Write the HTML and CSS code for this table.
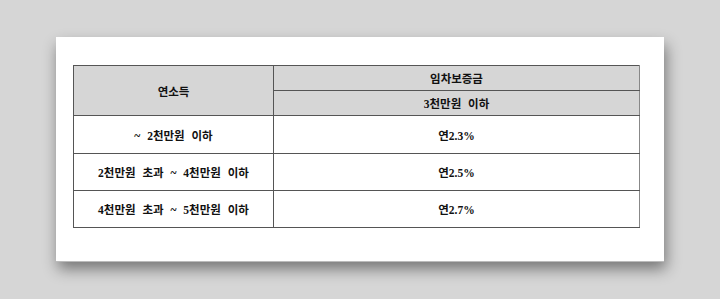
FILE: index.html
```html
<!DOCTYPE html>
<html lang="ko">
<head>
<meta charset="utf-8">
<link rel="stylesheet" href="styles.css">
</head>
<body>
<div class="paper">
  <table class="rate">
    <tr class="head">
      <th rowspan="2" class="c1">연소득</th>
      <th class="h1">임차보증금</th>
    </tr>
    <tr class="head">
      <th class="h2">3천만원 이하</th>
    </tr>
    <tr class="r1"><td>~ 2천만원 이하</td><td>연2.3%</td></tr>
    <tr class="r2"><td>2천만원 초과 ~ 4천만원 이하</td><td>연2.5%</td></tr>
    <tr class="r3"><td>4천만원 초과 ~ 5천만원 이하</td><td>연2.7%</td></tr>
  </table>
</div>
</body>
</html>
```
FILE: styles.css
```css
html, body { margin: 0; padding: 0; }
body {
  background: #d6d6d6;
  width: 720px;
  height: 299px;
  overflow: hidden;
  padding: 37px 0 0 56px;
  box-sizing: border-box;
  font-family: "Liberation Serif", "Noto Sans CJK KR", serif;
}
.paper {
  width: 608px;
  height: 224px;
  background: #fff;
  box-sizing: border-box;
  padding: 28px 0 0 17px;
  box-shadow: 0 1px 0 #bbb, 2px 8px 14px rgba(0,0,0,0.45);
}
.rate {
  border-collapse: collapse;
  width: 567px;
  table-layout: fixed;
  font-size: 11.5px;
  color: #111;
  word-spacing: 4px;
}
.rate th, .rate td {
  border: 1px solid #555;
  text-align: center;
  padding: 0;
  font-weight: 600;
}
.rate th.c1 { width: 199px; }
.rate tr > :last-child { border-right-color: #888; }
.head th { background: #d6d6d6; }
.h1, .h2 { height: 24px; }
.r1 td { height: 37px; }
.r2 td, .r3 td { height: 36px; }
.rate tr.r2 td, .rate tr.r3 td { border-top-color: #888; }
```
